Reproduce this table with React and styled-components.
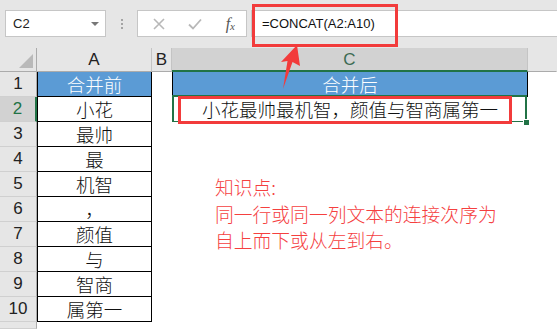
import React from "react";
import styled, { createGlobalStyle } from "styled-components";

const GREEN = "#217346";
const RED = "#F23B3B";
const HEAD_BG = "#E6E6E6";
const HEAD_SEL = "#D2D2D2";
const BLUE = "#5B9BD5";
const CJK = `"Noto Sans CJK SC", "Noto Sans", sans-serif`;

const GlobalStyle = createGlobalStyle`
  html, body {
    margin: 0;
    padding: 0;
    background: #fff;
  }
  body {
    width: 557px;
    height: 329px;
    overflow: hidden;
    font-family: "Liberation Sans", Arial, sans-serif;
  }
`;

const columnA = ["小花", "最帅", "最", "机智", "，", "颜值", "与", "智商", "属第一"];

const App = () => {
  return (
    <Page>
      <GlobalStyle />
      <FormulaBar>
        <NameBox>
          <span>C2</span>
          <Caret />
        </NameBox>
        <Grip>
          <Dot />
          <Dot />
          <Dot />
        </Grip>
        <ActionBox>
          <svg width="12" height="12" viewBox="0 0 12 12">
            <path d="M1 1 L11 11 M11 1 L1 11" stroke="#B8B8B8" strokeWidth="1.6" fill="none" />
          </svg>
          <svg width="14" height="12" viewBox="0 0 14 12">
            <path d="M1 6.5 L5 10.5 L13 1.5" stroke="#B8B8B8" strokeWidth="1.8" fill="none" />
          </svg>
          <Fx>
            f<sub>x</sub>
          </Fx>
        </ActionBox>
        <FormulaInput>=CONCAT(A2:A10)</FormulaInput>
      </FormulaBar>

      <Sheet>
        <Corner>
          <svg width="16" height="16" viewBox="0 0 16 16">
            <polygon points="15,1 15,15 1,15" fill="#B9B9B9" />
          </svg>
        </Corner>
        <ColHeader>A</ColHeader>
        <ColHeader>B</ColHeader>
        <ColHeader $selected>C</ColHeader>
        <ColHeader $last />

        <RowHeader>1</RowHeader>
        <Cell $head $boxed>合并前</Cell>
        <Cell />
        <Cell $head $boxed>合并后</Cell>
        <Cell />

        <RowHeader $selected>2</RowHeader>
        <Cell $boxed>{columnA[0]}</Cell>
        <Cell />
        <Cell $active>小花最帅最机智，颜值与智商属第一</Cell>
        <Cell />

        {columnA.slice(1).map((text, i) => (
          <React.Fragment key={i}>
            <RowHeader>{i + 3}</RowHeader>
            <Cell $boxed>{text}</Cell>
            <Cell />
            <Cell />
            <Cell />
          </React.Fragment>
        ))}

        <RowHeader $tail />
        <Cell />
        <Cell />
        <Cell />
        <Cell />
      </Sheet>

      {/* annotations drawn over the sheet */}
      <Mark style={{ left: 252, top: 4, width: 146, height: 43 }} />
      <Mark style={{ left: 178, top: 96, width: 334, height: 28 }} />
      <Arrow width="557" height="329" viewBox="0 0 557 329">
        <polygon points="297,45 300,66 292.5,62 283,89 287.5,61 281,62" fill={RED} />
      </Arrow>
      <Note>
        知识点:
        <br />
        同一行或同一列文本的连接次序为
        <br />
        自上而下或从左到右。
      </Note>
    </Page>
  );
};

export default App;

const Page = styled.div`
  position: relative;
  width: 557px;
  height: 329px;
  overflow: hidden;
  display: flex;
  flex-direction: column;
`;

const FormulaBar = styled.div`
  height: 48px;
  box-sizing: border-box;
  padding: 10px 0 11px 5px;
  background: ${HEAD_BG};
  display: flex;
  align-items: stretch;
`;

const NameBox = styled.div`
  width: 101px;
  box-sizing: border-box;
  background: #fff;
  border: 1px solid #c6c6c6;
  display: flex;
  align-items: center;
  justify-content: space-between;
  padding: 0 6px 0 7px;
  font-size: 13px;
  color: #222;
`;

const Caret = styled.span`
  width: 0;
  height: 0;
  border-left: 4px solid transparent;
  border-right: 4px solid transparent;
  border-top: 4px solid #777;
`;

const Grip = styled.div`
  width: 31px;
  display: flex;
  flex-direction: column;
  align-items: center;
  justify-content: center;
  gap: 2px;
`;

const Dot = styled.span`
  width: 2px;
  height: 2px;
  background: #a4a4a4;
`;

const ActionBox = styled.div`
  width: 110px;
  box-sizing: border-box;
  background: #fff;
  border: 1px solid #c6c6c6;
  display: flex;
  align-items: center;
  justify-content: space-between;
  padding: 0 11px 0 15px;
`;

const Fx = styled.span`
  font-family: "Liberation Serif", "Times New Roman", serif;
  font-style: italic;
  font-size: 16px;
  color: #555;
  line-height: 1;

  sub {
    font-size: 11px;
    vertical-align: -1px;
  }
`;

const FormulaInput = styled.div`
  flex: 1;
  margin-left: 4px;
  background: #fff;
  border: 1px solid #c6c6c6;
  border-right: none;
  display: flex;
  align-items: center;
  padding-left: 10px;
  font-size: 13px;
  color: #111;
`;

const Sheet = styled.div`
  flex: 1;
  display: grid;
  grid-template-columns: 37px 115px 20px 356px 1fr;
  grid-template-rows: 24px repeat(10, 25px) 1fr;
`;

const Corner = styled.div`
  background: ${HEAD_BG};
  border-right: 1px solid #ababab;
  border-bottom: 1px solid #ababab;
  display: flex;
  align-items: flex-end;
  justify-content: flex-end;
  padding: 0 2px 2px 0;
`;

const ColHeader = styled.div`
  background: ${(p) => (p.$selected ? HEAD_SEL : HEAD_BG)};
  border-right: 1px solid ${(p) => (p.$last ? "transparent" : "#c4c4c4")};
  border-bottom: ${(p) => (p.$selected ? `2px solid ${GREEN}` : "1px solid #ababab")};
  color: ${(p) => (p.$selected ? "#3d6b53" : "#222")};
  display: flex;
  align-items: center;
  justify-content: center;
  font-size: 17px;
  padding-top: 1px;
`;

const RowHeader = styled.div`
  background: ${(p) => (p.$selected ? HEAD_SEL : HEAD_BG)};
  border-right: ${(p) => (p.$selected ? `2px solid ${GREEN}` : "1px solid #ababab")};
  border-bottom: 1px solid #d0d0d0;
  color: ${(p) => (p.$selected ? GREEN : "#222")};
  display: flex;
  align-items: center;
  justify-content: center;
  font-size: 17px;
`;

const Cell = styled.div`
  position: relative;
  box-sizing: border-box;
  background: ${(p) => (p.$head ? BLUE : "#fff")};
  color: ${(p) => (p.$head ? "#fff" : "#111")};
  border-left: ${(p) => (p.$boxed ? "1px solid #000" : "none")};
  border-right: ${(p) => (p.$boxed ? "1px solid #000" : "none")};
  border-bottom: ${(p) => (p.$boxed ? "1px solid #000" : "none")};
  display: flex;
  align-items: center;
  justify-content: center;
  font-family: ${CJK};
  font-weight: 300;
  font-size: 18.5px;
  line-height: 1;
  white-space: nowrap;

  ${(p) =>
    p.$active &&
    `
    &::after {
      content: "";
      position: absolute;
      top: -2px;
      left: 0;
      right: 1px;
      bottom: -1px;
      border: 2px solid ${GREEN};
    }
    &::before {
      content: "";
      position: absolute;
      right: -2px;
      bottom: -4px;
      width: 5px;
      height: 5px;
      background: ${GREEN};
      border: 1px solid #fff;
      z-index: 1;
    }
  `}
`;

const Mark = styled.div`
  position: absolute;
  box-sizing: border-box;
  border: 3px solid ${RED};
  pointer-events: none;
`;

const Arrow = styled.svg`
  position: absolute;
  left: 0;
  top: 0;
  pointer-events: none;
`;

const Note = styled.div`
  position: absolute;
  left: 215px;
  top: 174px;
  color: #f5403f;
  font-family: ${CJK};
  font-weight: 300;
  font-size: 18.8px;
  line-height: 26.5px;
  white-space: nowrap;
`;
